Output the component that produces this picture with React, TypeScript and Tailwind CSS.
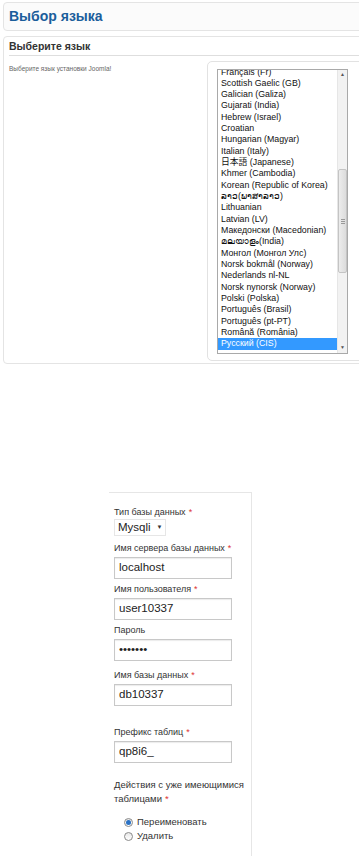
const languages = [
  "Français (Fr)",
  "Scottish Gaelic (GB)",
  "Galician (Galiza)",
  "Gujarati (India)",
  "Hebrew (Israel)",
  "Croatian",
  "Hungarian (Magyar)",
  "Italian (Italy)",
  "日本語 (Japanese)",
  "Khmer (Cambodia)",
  "Korean (Republic of Korea)",
  "ລາວ(ພາສາລາວ)",
  "Lithuanian",
  "Latvian (LV)",
  "Македонски (Macedonian)",
  "മലയാളം(India)",
  "Монгол (Монгол Улс)",
  "Norsk bokmål (Norway)",
  "Nederlands nl-NL",
  "Norsk nynorsk (Norway)",
  "Polski (Polska)",
  "Português (Brasil)",
  "Português (pt-PT)",
  "Română (România)",
  "Русский (CIS)",
];

function Field({ label, required = true, children }: { label: string; required?: boolean; children: React.ReactNode }) {
  return (
    <div>
      <div className="h-[12px] whitespace-nowrap text-[9px] leading-[12px] text-[#333]">
        {label}
        {required && <span className="ml-[3px] text-[#d33]">*</span>}
      </div>
      {children}
    </div>
  );
}

function TextBox({ value }: { value: string }) {
  return (
    <div className="mt-[3px] flex h-[22px] w-[118px] items-center border border-[#c8c8c8] bg-white pl-[4px] text-[11.5px] text-[#222] shadow-[inset_0_1px_1px_rgba(0,0,0,0.08)]">
      {value}
    </div>
  );
}

function Radio({ checked, label }: { checked?: boolean; label: string }) {
  return (
    <div className="flex h-[14px] items-center">
      <span className="flex h-[9px] w-[9px] items-center justify-center rounded-full border border-[#8a8a8a] bg-gradient-to-b from-[#e8e8e8] to-white">
        {checked && <span className="h-[5px] w-[5px] rounded-full bg-[#2a72c5]" />}
      </span>
      <span className="ml-[4px] text-[9.5px] text-[#333]">{label}</span>
    </div>
  );
}

export default function App() {
  return (
    <div className="h-[856px] w-[359px] overflow-hidden bg-white font-['Liberation_Sans',Arial,'Noto_Sans_CJK_JP',sans-serif] text-[#333]">
      {/* Step header */}
      <div className="pl-[3px] pt-[2px]">
        <div className="flex h-[29px] w-[380px] items-center rounded-[4px] border border-[#e4e4e4] bg-[#fbfbfb] pl-[5px]">
          <h1 className="text-[14px] font-bold text-[#1b5e9b]">Выбор языка</h1>
        </div>

        {/* Language panel */}
        <div className="mt-[5px] h-[328px] w-[380px] rounded-[4px] border border-[#e4e4e4] bg-white">
          <div className="mx-[5px] flex h-[19px] items-center border-b border-[#dedede] pt-[2px]">
            <h2 className="text-[10.5px] font-bold text-[#333]">Выберите язык</h2>
          </div>
          <div className="flex">
            <div className="w-[203px] shrink-0 pl-[5px] pt-[8px]">
              <p className="text-[6.5px] text-[#666]">Выберите язык установки Joomla!</p>
            </div>
            <div className="mt-[5px] h-[300px] w-[160px] rounded-[5px] border border-[#e2e2e2] pl-[9px] pt-[7px]">
              <div className="flex h-[285px] w-[131px] border border-[#a9a9a9] bg-white">
                <div className="flex-1 overflow-hidden">
                  <div className="-mt-[3.5px]">
                    {languages.map((lang, i) => (
                      <div
                        key={lang}
                        className={
                          i === languages.length - 1
                            ? "h-[11.33px] bg-[#3399ff] pl-[3px] text-[8.8px] leading-[11.33px] whitespace-nowrap text-white"
                            : "h-[11.33px] pl-[3px] text-[8.8px] leading-[11.33px] whitespace-nowrap text-[#111]"
                        }
                      >
                        {lang}
                      </div>
                    ))}
                  </div>
                </div>
                {/* Scrollbar */}
                <div className="flex w-[10px] flex-col border-l border-[#e6e6e6] bg-[#f2f2f2]">
                  <div className="flex h-[10px] items-center justify-center text-[5px] text-[#555]">▲</div>
                  <div className="flex-1 pt-[89px]">
                    <div className="flex h-[104px] items-center justify-center rounded-[2px] border border-[#c4c4c4] bg-gradient-to-r from-[#ececec] to-[#dcdcdc]">
                      <div className="flex flex-col gap-[1px]">
                        <span className="h-px w-[4px] bg-[#999]" />
                        <span className="h-px w-[4px] bg-[#999]" />
                        <span className="h-px w-[4px] bg-[#999]" />
                      </div>
                    </div>
                  </div>
                  <div className="flex h-[10px] items-center justify-center text-[5px] text-[#555]">▼</div>
                </div>
              </div>
            </div>
          </div>
        </div>
      </div>

      {/* Database settings */}
      <div className="ml-[109px] mt-[128px] h-[400px] w-[143px] border-r border-t border-[#e6e6e6] pl-[5px] pt-[13px]">
        <Field label="Тип базы данных">
          <div className="mt-[1px] flex h-[17px] w-[52px] items-center whitespace-nowrap border border-[#e6e6e6] bg-white pl-[3px] text-[11.5px] text-[#222]">
            Mysqli
            <span className="ml-[6px] text-[6px] text-[#333]">▼</span>
          </div>
        </Field>
        <div className="mt-[6px]">
          <Field label="Имя сервера базы данных">
            <TextBox value="localhost" />
          </Field>
        </div>
        <div className="mt-[4px]">
          <Field label="Имя пользователя">
            <TextBox value="user10337" />
          </Field>
        </div>
        <div className="mt-[4px]">
          <Field label="Пароль" required={false}>
            <TextBox value="•••••••" />
          </Field>
        </div>
        <div className="mt-[8px]">
          <Field label="Имя базы данных">
            <TextBox value="db10337" />
          </Field>
        </div>
        <div className="mt-[20px]">
          <Field label="Префикс таблиц">
            <TextBox value="qp8i6_" />
          </Field>
        </div>
        <div className="mt-[15px] text-[9.5px] leading-[14px] text-[#333]">
          Действия с уже имеющимися
          <br />
          таблицами<span className="ml-[3px] text-[#d33]">*</span>
        </div>
        <div className="ml-[10px] mt-[9px]">
          <Radio checked label="Переименовать" />
          <Radio label="Удалить" />
        </div>
      </div>
    </div>
  );
}
